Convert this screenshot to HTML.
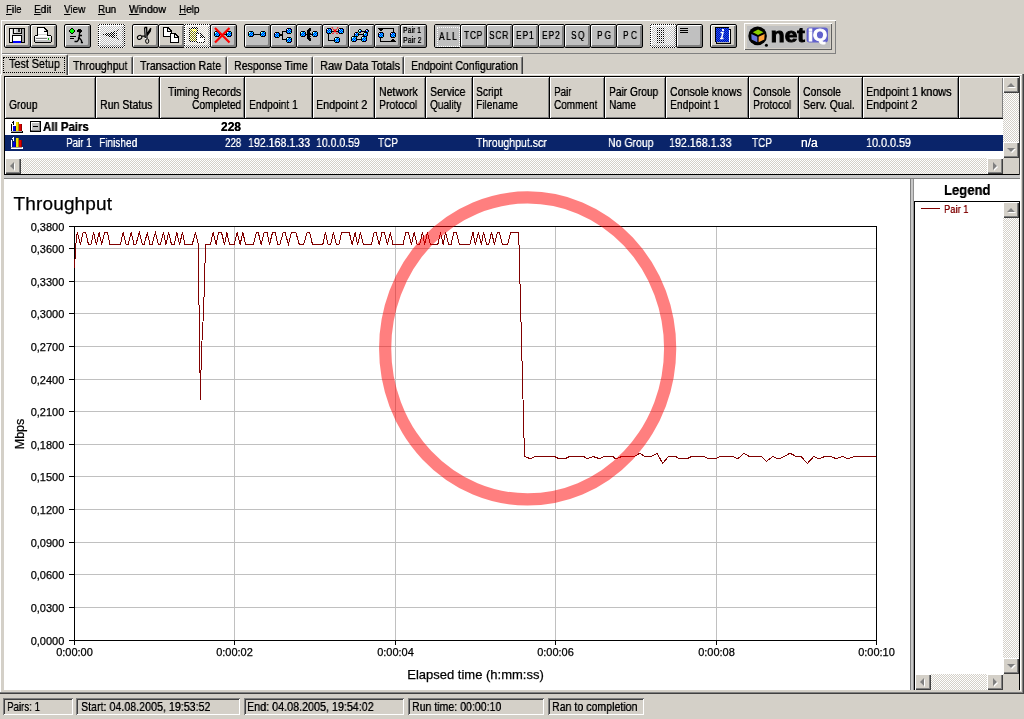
<!DOCTYPE html>
<html lang="en"><head><meta charset="utf-8"><title>Throughput</title>
<style>
html,body{margin:0;padding:0}
body{width:1024px;height:719px;background:#D4D0C8;position:relative;overflow:hidden;font:12px "Liberation Sans",sans-serif;color:#000}
.a,.t,.b,.hd,.sb,.tb{position:absolute}
.t{white-space:nowrap;transform-origin:0 0;will-change:transform;text-shadow:0 0 0 currentColor}
.b{top:24px;width:25px;height:22px;border:1px solid #000;border-radius:2px;background:#C0C0C0;box-shadow:inset 1px 1px 0 #fff,inset -1px -1px 0 #808080,inset -2px -2px 0 #808080}
.b.l{background:#D4D0C8}
.hd{top:77px;height:41px;background:#D4D0C8;box-shadow:inset 1px 1px 0 #fff,inset -1px -1px 0 #808080}
.sb{width:16px;height:16px;background:#D4D0C8;box-shadow:inset 1px 1px 0 #fff,inset -1px -1px 0 #404040,inset -2px -2px 0 #808080}
.sb i{position:absolute;width:0;height:0;border:4px solid transparent;filter:drop-shadow(1px 1px 0 #fff)}
.ck{background:repeating-conic-gradient(#fff 0 25%,#D4D0C8 0 50%) 0 0/2px 2px}
.tb{top:56px;height:18px;box-sizing:border-box;border-top:1px solid #fff;border-left:1px solid #fff;border-right:1px solid #404040;border-radius:2px 2px 0 0;box-shadow:inset -1px 0 0 #808080}
.st{position:absolute;top:698px;height:17px;box-shadow:inset 1px 1px 0 #808080,inset -1px -1px 0 #fff,inset 2px 2px 0 #404040}
</style></head>
<body>
<div class="t" style="left:5.6px;top:3.69px;font-size:11px;line-height:11px;transform:scaleX(0.880);"><u>F</u>ile</div>
<div class="t" style="left:33.8px;top:3.69px;font-size:11px;line-height:11px;transform:scaleX(0.918);"><u>E</u>dit</div>
<div class="t" style="left:63.8px;top:3.69px;font-size:11px;line-height:11px;transform:scaleX(0.897);"><u>V</u>iew</div>
<div class="t" style="left:98px;top:3.69px;font-size:11px;line-height:11px;transform:scaleX(0.902);"><u>R</u>un</div>
<div class="t" style="left:129.3px;top:3.69px;font-size:11px;line-height:11px;transform:scaleX(0.943);"><u>W</u>indow</div>
<div class="t" style="left:178.8px;top:3.69px;font-size:11px;line-height:11px;transform:scaleX(0.902);"><u>H</u>elp</div>
<div class="a" style="left:1px;top:20px;width:835px;height:34px;box-shadow:inset 1px 1px 0 #fff,inset -1px -1px 0 #808080"></div>
<div class="b l" style="left:4px"></div>
<div class="b l" style="left:30px"></div>
<div class="b" style="left:64px"></div>
<div class="b" style="left:98px"></div>
<div class="b l" style="left:132px"></div>
<div class="b l" style="left:158px"></div>
<div class="b l" style="left:184px"></div>
<div class="b" style="left:210px"></div>
<div class="b" style="left:244px"></div>
<div class="b" style="left:270px"></div>
<div class="b" style="left:296px"></div>
<div class="b" style="left:322px"></div>
<div class="b" style="left:348px"></div>
<div class="b" style="left:374px"></div>
<div class="b" style="left:400px"></div>
<div class="b" style="left:434px"></div>
<div class="b" style="left:460px"></div>
<div class="b" style="left:486px"></div>
<div class="b" style="left:512px"></div>
<div class="b" style="left:538px"></div>
<div class="b" style="left:564px"></div>
<div class="b" style="left:590px"></div>
<div class="b" style="left:616px"></div>
<div class="b" style="left:650px"></div>
<div class="b" style="left:676px"></div>
<div class="b l" style="left:710px"></div>
<div class="a" style="left:435px;top:25px;width:25px;height:22px;background:#C0C0C0"></div>
<div class="a" style="left:437px;top:27px;width:21px;height:18px;border:1px dotted #fff"></div>
<div class="a" style="left:744px;top:23px;width:88px;height:27px;background:#C0C0C0;box-shadow:inset 1px 1px 0 #fff,inset -1px -1px 0 #606060,inset 3px 3px 0 #D4D0C8,inset -2px -2px 0 #D4D0C8"></div>
<div class="t" style="left:438.8px;top:31.54px;font-size:10px;line-height:10px;letter-spacing:1.82px;transform:scaleX(0.84)">ALL</div>
<div class="t" style="left:463.5px;top:30.54px;font-size:10px;line-height:10px;letter-spacing:0.89px;transform:scaleX(0.84)">TCP</div>
<div class="t" style="left:488.8px;top:30.54px;font-size:10px;line-height:10px;letter-spacing:0.87px;transform:scaleX(0.84)">SCR</div>
<div class="t" style="left:516px;top:30.54px;font-size:10px;line-height:10px;letter-spacing:1.14px;transform:scaleX(0.84)">EP1</div>
<div class="t" style="left:542px;top:30.54px;font-size:10px;line-height:10px;letter-spacing:1.14px;transform:scaleX(0.84)">EP2</div>
<div class="t" style="left:570.5px;top:30.54px;font-size:10px;line-height:10px;letter-spacing:1.62px;transform:scaleX(0.84)">SQ</div>
<div class="t" style="left:596.5px;top:30.54px;font-size:10px;line-height:10px;letter-spacing:2.22px;transform:scaleX(0.84)">PG</div>
<div class="t" style="left:622.5px;top:30.54px;font-size:10px;line-height:10px;letter-spacing:2.77px;transform:scaleX(0.84)">PC</div>
<div class="t" style="left:403.4px;top:26.20px;font-size:8.5px;line-height:8.5px;transform:scaleX(0.811);">Pair 1</div>
<div class="t" style="left:403.4px;top:36.20px;font-size:8.5px;line-height:8.5px;transform:scaleX(0.829);">Pair 2</div>
<svg class="a" style="left:0;top:20px" width="840" height="34" viewBox="0 20 840 34" shape-rendering="crispEdges" font-family="Liberation Sans, sans-serif">
<defs><pattern id="nd" width="2" height="2" patternUnits="userSpaceOnUse"><rect width="2" height="2" fill="#0000FF"/><rect width="1" height="1" fill="#00FFFF"/><rect x="1" y="1" width="1" height="1" fill="#00FFFF"/></pattern><pattern id="dz" width="2" height="2" patternUnits="userSpaceOnUse"><rect width="1" height="1" fill="#fff"/><rect x="1" y="1" width="1" height="1" fill="#fff"/></pattern><pattern id="bk" width="2" height="2" patternUnits="userSpaceOnUse"><rect width="2" height="2" fill="#0000C0"/><rect width="1" height="1" fill="#2060E0"/><rect x="1" y="1" width="1" height="1" fill="#2060E0"/></pattern></defs>
<rect x="9" y="28" width="16" height="15" fill="#000"/><rect x="10" y="29" width="14" height="13" fill="#C8C8C8"/><rect x="10" y="29" width="2" height="13" fill="#F4F4F4"/><rect x="22" y="29" width="2" height="13" fill="#A8A8A8"/><rect x="13" y="28" width="9" height="6" fill="#000"/><rect x="14" y="29" width="7" height="4" fill="#C8C8C8"/><rect x="18" y="29" width="2" height="3" fill="#303030"/><rect x="14" y="29" width="2" height="4" fill="#E8E8E8"/><rect x="12" y="35" width="10" height="8" fill="#000"/><rect x="13" y="36" width="8" height="5" fill="#fff"/><rect x="13" y="41" width="8" height="2" fill="#0000FF"/>
<path d="M37 27H44L48 31V37H37Z" fill="#000"/><path d="M38 28H43.5V31.5H47V36H38Z" fill="#fff"/><path d="M44 28.5L46.5 31H44Z" fill="#E0E0E0"/><rect x="38" y="34" width="9" height="1" fill="#D0D0D0"/><path d="M35 35H38V36H47V35H51V36H52V42H51V43H35V42H34V36H35Z" fill="#000"/><rect x="35" y="36" width="16" height="6" fill="#E8E8E8"/><rect x="35" y="36" width="16" height="1" fill="#fff"/><rect x="35" y="40" width="16" height="2" fill="#C0C0C0"/><rect x="36" y="38" width="11" height="1" fill="#808080"/><rect x="36" y="39" width="11" height="1" fill="#fff"/><rect x="48" y="38" width="1" height="2" fill="#00B000"/>
<rect x="71" y="28" width="2" height="6" fill="#000"/><rect x="70" y="29" width="4" height="4" fill="#000"/><rect x="69" y="30" width="6" height="2" fill="#000"/><rect x="71" y="29" width="2" height="4" fill="#00FF00"/><rect x="70" y="30" width="4" height="2" fill="#00FF00"/><rect x="70" y="36" width="6" height="1" fill="#000"/><rect x="70" y="38" width="4" height="1" fill="#000"/><path d="M78 29H81V30H82V32H81V33H79V32H77V30H78Z" fill="#000"/><path d="M79.5 32V36L78.5 38V40M78.5 35.5H82M78.5 40L77 41.5H74.5M79 37.5L81.5 40.5V42.5H83" fill="none" stroke="#000" stroke-width="1.3" shape-rendering="geometricPrecision"/>
<path d="M103 34.5L115 31V38.5Z" fill="#000"/><path d="M118.5 29.5L116.5 32V37L118.5 39.5" fill="none" stroke="#000" stroke-width="1" shape-rendering="geometricPrecision"/>
<path d="M144.6 27.5H146.6L147 38.5H145.3Z" fill="#fff"/><path d="M144.6 27.5H146.6L147 38.5M144.6 27.5L145.3 38M150.8 28.2L146.8 34.6M150.8 28.2L150.2 31.2L146.9 36M145.3 36L141.8 36.2" fill="none" stroke="#000" stroke-width="1.3" shape-rendering="geometricPrecision"/><ellipse cx="139.6" cy="37.4" rx="2.3" ry="1.9" transform="rotate(-30 139.6 37.4)" fill="none" stroke="#000" shape-rendering="geometricPrecision"/><ellipse cx="147.2" cy="41.1" rx="1.6" ry="2.3" fill="none" stroke="#000" shape-rendering="geometricPrecision"/>
<path d="M163 27H168L172 31V37H163Z" fill="#000"/><path d="M164 28H167V32H171V36H164Z" fill="#fff"/><path d="M168 28.5L170.5 31H168Z" fill="#E8E8E8"/><path d="M170 33H175L179 37V43H170Z" fill="#000"/><path d="M171 34H174V38H178V42H171Z" fill="#fff"/><path d="M175 34.5L177.5 37H175Z" fill="#E8E8E8"/>
<rect x="189" y="28" width="9" height="14" fill="#000"/><rect x="190" y="29" width="7" height="12" fill="#808000"/><rect x="191" y="27" width="6" height="2" fill="#000"/><rect x="192" y="29" width="4" height="2" fill="#FFFF00"/><path d="M196 33H201L205 37V43H196Z" fill="#000"/><path d="M197 34H200V38H204V42H197Z" fill="#fff"/>
<rect x="220" y="34" width="7" height="1" fill="#000"/><rect x="215" y="31" width="4" height="6" fill="#000"/><rect x="214" y="32" width="6" height="4" fill="#000"/><rect x="215" y="32" width="4" height="4" fill="url(#nd)"/><rect x="215" y="32" width="1" height="1" fill="#fff"/><rect x="227" y="31" width="4" height="6" fill="#000"/><rect x="226" y="32" width="6" height="4" fill="#000"/><rect x="227" y="32" width="4" height="4" fill="url(#nd)"/><rect x="227" y="32" width="1" height="1" fill="#fff"/><path d="M215 28L229.5 42.5M229.5 28L215 42.5" fill="none" stroke="#FF0000" stroke-width="2.2" shape-rendering="geometricPrecision"/>
<rect x="254" y="34" width="6" height="1" fill="#000"/><rect x="249" y="31" width="4" height="6" fill="#000"/><rect x="248" y="32" width="6" height="4" fill="#000"/><rect x="249" y="32" width="4" height="4" fill="url(#nd)"/><rect x="249" y="32" width="1" height="1" fill="#fff"/><rect x="261" y="31" width="4" height="6" fill="#000"/><rect x="260" y="32" width="6" height="4" fill="#000"/><rect x="261" y="32" width="4" height="4" fill="url(#nd)"/><rect x="261" y="32" width="1" height="1" fill="#fff"/><rect x="280" y="34" width="3" height="2" fill="#000"/><path d="M286 31.5H282.5V39.5H286" fill="none" stroke="#000" stroke-width="1" /><rect x="275" y="32" width="4" height="6" fill="#000"/><rect x="274" y="33" width="6" height="4" fill="#000"/><rect x="275" y="33" width="4" height="4" fill="url(#nd)"/><rect x="275" y="33" width="1" height="1" fill="#fff"/><rect x="287" y="28" width="4" height="6" fill="#000"/><rect x="286" y="29" width="6" height="4" fill="#000"/><rect x="287" y="29" width="4" height="4" fill="url(#nd)"/><rect x="287" y="29" width="1" height="1" fill="#fff"/><rect x="287" y="37" width="4" height="6" fill="#000"/><rect x="286" y="38" width="6" height="4" fill="#000"/><rect x="287" y="38" width="4" height="4" fill="url(#nd)"/><rect x="287" y="38" width="1" height="1" fill="#fff"/><rect x="306" y="34" width="6" height="1" fill="#000"/><rect x="301" y="31" width="4" height="6" fill="#000"/><rect x="300" y="32" width="6" height="4" fill="#000"/><rect x="301" y="32" width="4" height="4" fill="url(#nd)"/><rect x="301" y="32" width="1" height="1" fill="#fff"/><rect x="313" y="31" width="4" height="6" fill="#000"/><rect x="312" y="32" width="6" height="4" fill="#000"/><rect x="313" y="32" width="4" height="4" fill="url(#nd)"/><rect x="313" y="32" width="1" height="1" fill="#fff"/><path d="M309 28H311V31H310V33H311V34H310V36H311V37H310V38H311V41H309V40H308V39H307V30H308V29H309Z" fill="#000"/><rect x="332" y="31" width="7" height="1" fill="#000"/><path d="M328.5 34V40.5H334" fill="none" stroke="#000" stroke-width="1" /><rect x="327" y="28" width="4" height="6" fill="#000"/><rect x="326" y="29" width="6" height="4" fill="#000"/><rect x="327" y="29" width="4" height="4" fill="url(#nd)"/><rect x="327" y="29" width="1" height="1" fill="#fff"/><rect x="339" y="28" width="4" height="6" fill="#000"/><rect x="338" y="29" width="6" height="4" fill="#000"/><rect x="339" y="29" width="4" height="4" fill="url(#nd)"/><rect x="339" y="29" width="1" height="1" fill="#fff"/><rect x="335" y="37" width="4" height="6" fill="#000"/><rect x="334" y="38" width="6" height="4" fill="#000"/><rect x="335" y="38" width="4" height="4" fill="url(#nd)"/><rect x="335" y="38" width="1" height="1" fill="#fff"/><path d="M331.8 27.3L338.2 34.7M338.2 27.3L331.8 34.7" fill="none" stroke="#FF0000" stroke-width="1.2" stroke-dasharray="1.5 0.9" shape-rendering="geometricPrecision"/><rect x="334" y="30" width="2" height="2" fill="#FF0000"/><rect x="362" y="31" width="3" height="1" fill="#000"/><rect x="359" y="34" width="4" height="1" fill="#000"/><rect x="357" y="39" width="4" height="1" fill="#000"/><rect x="359" y="29" width="2" height="4" fill="#000"/><rect x="358" y="30" width="4" height="2" fill="#000"/><rect x="359" y="30" width="2" height="2" fill="url(#nd)"/><rect x="359" y="30" width="1" height="1" fill="#fff"/><rect x="366" y="29" width="2" height="4" fill="#000"/><rect x="365" y="30" width="4" height="2" fill="#000"/><rect x="366" y="30" width="2" height="2" fill="url(#nd)"/><rect x="366" y="30" width="1" height="1" fill="#fff"/><rect x="355" y="32" width="3" height="5" fill="#000"/><rect x="354" y="33" width="5" height="3" fill="#000"/><rect x="355" y="33" width="3" height="3" fill="url(#nd)"/><rect x="355" y="33" width="1" height="1" fill="#fff"/><rect x="364" y="32" width="3" height="5" fill="#000"/><rect x="363" y="33" width="5" height="3" fill="#000"/><rect x="364" y="33" width="3" height="3" fill="url(#nd)"/><rect x="364" y="33" width="1" height="1" fill="#fff"/><rect x="352" y="36" width="4" height="6" fill="#000"/><rect x="351" y="37" width="6" height="4" fill="#000"/><rect x="352" y="37" width="4" height="4" fill="url(#nd)"/><rect x="352" y="37" width="1" height="1" fill="#fff"/><rect x="362" y="36" width="4" height="6" fill="#000"/><rect x="361" y="37" width="6" height="4" fill="#000"/><rect x="362" y="37" width="4" height="4" fill="url(#nd)"/><rect x="362" y="37" width="1" height="1" fill="#fff"/><path d="M380.5 28.5H393.5V32M380.5 38V41.5H396" fill="none" stroke="#000" stroke-width="1" /><path d="M378 28H384L381 32Z" fill="#000"/><path d="M390 42H396L393 38Z" fill="#000"/><rect x="379" y="32" width="4" height="6" fill="#000"/><rect x="378" y="33" width="6" height="4" fill="#000"/><rect x="379" y="33" width="4" height="4" fill="url(#nd)"/><rect x="379" y="33" width="1" height="1" fill="#fff"/><rect x="391" y="32" width="4" height="6" fill="#000"/><rect x="390" y="33" width="6" height="4" fill="#000"/><rect x="391" y="33" width="4" height="4" fill="url(#nd)"/><rect x="391" y="33" width="1" height="1" fill="#fff"/>
<rect x="656" y="28" width="8" height="1" fill="#000"/><rect x="656" y="30" width="8" height="1" fill="#000"/><rect x="656" y="32" width="8" height="1" fill="#000"/><rect x="656" y="34" width="8" height="1" fill="#000"/><rect x="656" y="36" width="8" height="1" fill="#000"/><rect x="656" y="38" width="8" height="1" fill="#000"/><rect x="656" y="40" width="8" height="1" fill="#000"/><rect x="656" y="42" width="8" height="1" fill="#000"/><rect x="680" y="28" width="8" height="1" fill="#000"/><rect x="680" y="30" width="8" height="1" fill="#000"/><rect x="680" y="32" width="8" height="1" fill="#000"/><rect x="716" y="29" width="15" height="15" fill="#000"/><rect x="717" y="30" width="13" height="13" fill="#fff"/><rect x="717" y="42" width="13" height="1" fill="#B0B0B0"/><rect x="715" y="27" width="14" height="15" fill="#000"/><rect x="716" y="28" width="13" height="14" fill="url(#bk)"/><rect x="722" y="29" width="2" height="2" fill="#fff"/><path d="M720.5 32.5H723L721.5 38.5M720 38.5H723.5" fill="none" stroke="#fff" stroke-width="1.5" shape-rendering="geometricPrecision"/>
<rect x="98" y="24" width="27" height="24" fill="url(#dz)"/><rect x="184" y="24" width="26" height="24" fill="url(#dz)"/><rect x="650" y="24" width="26" height="24" fill="url(#dz)"/>
<g shape-rendering="geometricPrecision"><circle cx="757.6" cy="35.9" r="9.3" fill="#000"/><circle cx="766.4" cy="45.3" r="1.5" fill="#000"/><path d="M752.8 32.2L758.1 29.5L763.4 32.2L758.1 34.9Z" fill="#8CD000"/><path d="M751.3 34L757.3 36.7V42.3L751.6 39.4Z" fill="#6674DC"/><path d="M764.6 34L758.6 36.7V42.3L764.3 39.4Z" fill="#FFA23C"/><rect x="806.6" y="27.4" width="21.4" height="15.2" rx="3" fill="#6262CC"/><text x="770.8" y="41.6" font-size="19.5" font-weight="bold" textLength="34" lengthAdjust="spacingAndGlyphs" stroke="#000" stroke-width="0.9">net</text><text x="808" y="41.2" font-size="16" font-weight="bold" fill="#fff" textLength="19" lengthAdjust="spacingAndGlyphs" stroke="#fff" stroke-width="0.9">iQ</text></g>
</svg>
<div class="a" style="left:0px;top:74px;width:1022px;height:1px;background:#fff"></div>
<div class="a" style="left:0px;top:74px;width:1px;height:619px;background:#fff"></div>
<div class="a" style="left:1022px;top:74px;width:1px;height:620px;background:#808080"></div>
<div class="a" style="left:1023px;top:74px;width:1px;height:620px;background:#404040"></div>
<div class="a" style="left:0px;top:692px;width:1023px;height:1px;background:#808080"></div>
<div class="a" style="left:0px;top:693px;width:1024px;height:1px;background:#404040"></div>
<div class="tb" style="left:68px;width:65px"></div>
<div class="t" style="left:73px;top:59.84px;font-size:12px;line-height:12px;transform:scaleX(0.888);">Throughput</div>
<div class="tb" style="left:133px;width:94px"></div>
<div class="t" style="left:140px;top:59.84px;font-size:12px;line-height:12px;transform:scaleX(0.893);">Transaction Rate</div>
<div class="tb" style="left:227px;width:86px"></div>
<div class="t" style="left:233.5px;top:59.84px;font-size:12px;line-height:12px;transform:scaleX(0.884);">Response Time</div>
<div class="tb" style="left:313px;width:91px"></div>
<div class="t" style="left:319.5px;top:59.84px;font-size:12px;line-height:12px;transform:scaleX(0.918);">Raw Data Totals</div>
<div class="tb" style="left:404px;width:119px"></div>
<div class="t" style="left:411.2px;top:59.84px;font-size:12px;line-height:12px;transform:scaleX(0.875);">Endpoint Configuration</div>
<div class="tb" style="left:1px;top:54px;width:67px;height:21px;background:#D4D0C8"></div>
<div class="a" style="left:3px;top:57px;width:60px;height:14px;border:1px dotted #000"></div>
<div class="t" style="left:9px;top:57.84px;font-size:12px;line-height:12px;transform:scaleX(0.899);">Test Setup</div>
<div class="a" style="left:4px;top:76px;width:1016px;height:99px;background:#000"></div>
<div class="a" style="left:5px;top:77px;width:1014px;height:97px;background:#fff"></div>
<div class="a" style="left:1019px;top:76px;width:1px;height:99px;background:#404040"></div>
<div class="a" style="left:1020px;top:76px;width:1px;height:615px;background:#fff"></div>
<div class="hd" style="left:5px;width:90px"></div>
<div class="hd" style="left:96px;width:63px"></div>
<div class="hd" style="left:160px;width:84px"></div>
<div class="hd" style="left:245px;width:67px"></div>
<div class="hd" style="left:313px;width:61px"></div>
<div class="hd" style="left:375px;width:50px"></div>
<div class="hd" style="left:426px;width:46px"></div>
<div class="hd" style="left:473px;width:76px"></div>
<div class="hd" style="left:550px;width:54px"></div>
<div class="hd" style="left:605px;width:60px"></div>
<div class="hd" style="left:666px;width:82px"></div>
<div class="hd" style="left:749px;width:49px"></div>
<div class="hd" style="left:799px;width:63px"></div>
<div class="hd" style="left:863px;width:95px"></div>
<div class="hd" style="left:959px;width:44px"></div>
<div class="a" style="left:95px;top:77px;width:1px;height:41px;background:#000"></div>
<div class="a" style="left:159px;top:77px;width:1px;height:41px;background:#000"></div>
<div class="a" style="left:244px;top:77px;width:1px;height:41px;background:#000"></div>
<div class="a" style="left:312px;top:77px;width:1px;height:41px;background:#000"></div>
<div class="a" style="left:374px;top:77px;width:1px;height:41px;background:#000"></div>
<div class="a" style="left:425px;top:77px;width:1px;height:41px;background:#000"></div>
<div class="a" style="left:472px;top:77px;width:1px;height:41px;background:#000"></div>
<div class="a" style="left:549px;top:77px;width:1px;height:41px;background:#000"></div>
<div class="a" style="left:604px;top:77px;width:1px;height:41px;background:#000"></div>
<div class="a" style="left:665px;top:77px;width:1px;height:41px;background:#000"></div>
<div class="a" style="left:748px;top:77px;width:1px;height:41px;background:#000"></div>
<div class="a" style="left:798px;top:77px;width:1px;height:41px;background:#000"></div>
<div class="a" style="left:862px;top:77px;width:1px;height:41px;background:#000"></div>
<div class="a" style="left:958px;top:77px;width:1px;height:41px;background:#000"></div>
<div class="a" style="left:5px;top:118px;width:998px;height:1px;background:#000"></div>
<div class="t" style="left:8.75px;top:98.84px;font-size:12px;line-height:12px;transform:scaleX(0.855);">Group</div>
<div class="t" style="left:99.5px;top:98.84px;font-size:12px;line-height:12px;transform:scaleX(0.884);">Run Status</div>
<div class="t" style="left:168px;top:85.84px;font-size:12px;line-height:12px;transform:scaleX(0.876);">Timing Records</div>
<div class="t" style="left:192px;top:98.84px;font-size:12px;line-height:12px;transform:scaleX(0.849);">Completed</div>
<div class="t" style="left:248.75px;top:98.84px;font-size:12px;line-height:12px;transform:scaleX(0.850);">Endpoint 1</div>
<div class="t" style="left:316.25px;top:98.84px;font-size:12px;line-height:12px;transform:scaleX(0.893);">Endpoint 2</div>
<div class="t" style="left:378.75px;top:85.84px;font-size:12px;line-height:12px;transform:scaleX(0.880);">Network</div>
<div class="t" style="left:378.75px;top:98.84px;font-size:12px;line-height:12px;transform:scaleX(0.869);">Protocol</div>
<div class="t" style="left:429.5px;top:85.84px;font-size:12px;line-height:12px;transform:scaleX(0.887);">Service</div>
<div class="t" style="left:429.5px;top:98.84px;font-size:12px;line-height:12px;transform:scaleX(0.843);">Quality</div>
<div class="t" style="left:476.25px;top:85.84px;font-size:12px;line-height:12px;transform:scaleX(0.856);">Script</div>
<div class="t" style="left:476.25px;top:98.84px;font-size:12px;line-height:12px;transform:scaleX(0.846);">Filename</div>
<div class="t" style="left:553.75px;top:85.84px;font-size:12px;line-height:12px;transform:scaleX(0.820);">Pair</div>
<div class="t" style="left:553.75px;top:98.84px;font-size:12px;line-height:12px;transform:scaleX(0.832);">Comment</div>
<div class="t" style="left:608.75px;top:85.84px;font-size:12px;line-height:12px;transform:scaleX(0.849);">Pair Group</div>
<div class="t" style="left:608.75px;top:98.84px;font-size:12px;line-height:12px;transform:scaleX(0.843);">Name</div>
<div class="t" style="left:669.5px;top:85.84px;font-size:12px;line-height:12px;transform:scaleX(0.882);">Console knows</div>
<div class="t" style="left:669.5px;top:98.84px;font-size:12px;line-height:12px;transform:scaleX(0.858);">Endpoint 1</div>
<div class="t" style="left:752.5px;top:85.84px;font-size:12px;line-height:12px;transform:scaleX(0.852);">Console</div>
<div class="t" style="left:752.5px;top:98.84px;font-size:12px;line-height:12px;transform:scaleX(0.869);">Protocol</div>
<div class="t" style="left:802.5px;top:85.84px;font-size:12px;line-height:12px;transform:scaleX(0.863);">Console</div>
<div class="t" style="left:802.5px;top:98.84px;font-size:12px;line-height:12px;transform:scaleX(0.875);">Serv. Qual.</div>
<div class="t" style="left:866.25px;top:85.84px;font-size:12px;line-height:12px;transform:scaleX(0.903);">Endpoint 1 knows</div>
<div class="t" style="left:866.25px;top:98.84px;font-size:12px;line-height:12px;transform:scaleX(0.893);">Endpoint 2</div>
<div class="t" style="left:43.2px;top:120.84px;font-size:12px;line-height:12px;transform:scaleX(0.954);font-weight:bold;">All Pairs</div>
<div class="t" style="left:221.25px;top:120.84px;font-size:12px;line-height:12px;font-weight:bold;">228</div>
<div class="a" style="left:5px;top:135px;width:998px;height:16px;background:#0A246A"></div>
<div class="t" style="left:66.25px;top:136.84px;font-size:12px;line-height:12px;transform:scaleX(0.818);color:#fff;">Pair 1</div>
<div class="t" style="left:98.75px;top:136.84px;font-size:12px;line-height:12px;transform:scaleX(0.843);color:#fff;">Finished</div>
<div class="t" style="left:225px;top:136.84px;font-size:12px;line-height:12px;transform:scaleX(0.812);color:#fff;">228</div>
<div class="t" style="left:248px;top:136.84px;font-size:12px;line-height:12px;transform:scaleX(0.885);color:#fff;">192.168.1.33</div>
<div class="t" style="left:316.25px;top:136.84px;font-size:12px;line-height:12px;transform:scaleX(0.874);color:#fff;">10.0.0.59</div>
<div class="t" style="left:378px;top:136.84px;font-size:12px;line-height:12px;transform:scaleX(0.833);color:#fff;">TCP</div>
<div class="t" style="left:476.25px;top:136.84px;font-size:12px;line-height:12px;transform:scaleX(0.877);color:#fff;">Throughput.scr</div>
<div class="t" style="left:607.5px;top:136.84px;font-size:12px;line-height:12px;transform:scaleX(0.875);color:#fff;">No Group</div>
<div class="t" style="left:668.75px;top:136.84px;font-size:12px;line-height:12px;transform:scaleX(0.892);color:#fff;">192.168.1.33</div>
<div class="t" style="left:752px;top:136.84px;font-size:12px;line-height:12px;transform:scaleX(0.833);color:#fff;">TCP</div>
<div class="t" style="left:801.25px;top:136.84px;font-size:12px;line-height:12px;color:#fff;">n/a</div>
<div class="t" style="left:865.5px;top:136.84px;font-size:12px;line-height:12px;transform:scaleX(0.899);color:#fff;">10.0.0.59</div>
<svg class="a" style="left:0;top:119px" width="60" height="34" viewBox="0 119 60 34" shape-rendering="crispEdges"><path d="M11.5 123.5V131.5H21M11.5 123.5L13.5 121.5V125" fill="none" stroke="#000"/><path d="M11 131H22V133H11Z" fill="#A0A0A0"/><path d="M11 132.5H22.5V130.5" fill="none" stroke="#000"/><rect x="13" y="126" width="3" height="5" fill="#0000E0"/><rect x="16" y="122" width="3" height="9" fill="#F0E000"/><rect x="19" y="124" width="3" height="7" fill="#E00000"/><rect x="18" y="122" width="1" height="9" fill="#A09000"/><rect x="21" y="124" width="1" height="7" fill="#900000"/><rect x="15" y="126" width="1" height="5" fill="#000090"/><path d="M11.5 139.5V147.5H21M11.5 139.5L13.5 137.5V141" fill="none" stroke="#fff"/><path d="M11 147H22V149H11Z" fill="#A0A0A0"/><path d="M11 148.5H22.5V146.5" fill="none" stroke="#fff"/><rect x="13" y="142" width="3" height="5" fill="#0000E0"/><rect x="16" y="138" width="3" height="9" fill="#F0E000"/><rect x="19" y="140" width="3" height="7" fill="#E00000"/><rect x="18" y="138" width="1" height="9" fill="#A09000"/><rect x="21" y="140" width="1" height="7" fill="#900000"/><rect x="15" y="142" width="1" height="5" fill="#000090"/><rect x="30" y="121" width="11" height="11" fill="#000"/><rect x="31" y="122" width="9" height="9" fill="#808080"/><rect x="31" y="122" width="8" height="8" fill="#fff"/><rect x="32" y="123" width="7" height="7" fill="#C0C0C0"/><rect x="33" y="126" width="5" height="1" fill="#000"/></svg>
<div class="a ck" style="left:1003px;top:77px;width:16px;height:81px"></div>
<div class="a ck" style="left:5px;top:158px;width:998px;height:16px"></div>
<div class="a" style="left:1003px;top:158px;width:16px;height:16px;background:#D4D0C8"></div>
<div class="sb" style="left:1003px;top:77px"><i style="left:4px;top:6px;border-bottom-color:#808080;border-top-width:0;border-bottom-width:4px"></i></div>
<div class="sb" style="left:1003px;top:142px"><i style="left:4px;top:6px;border-top-color:#808080;border-bottom-width:0;border-top-width:4px"></i></div>
<div class="sb" style="left:5px;top:158px"><i style="left:5px;top:4px;border-right-color:#808080;border-left-width:0;border-right-width:4px"></i></div>
<div class="sb" style="left:987px;top:158px"><i style="left:6px;top:4px;border-left-color:#808080;border-right-width:0;border-left-width:4px"></i></div>
<div class="a" style="left:4px;top:175px;width:1016px;height:3px;background:#C8C8C8"></div>
<div class="a" style="left:4px;top:178px;width:1016px;height:1px;background:#808080"></div>
<div class="a" style="left:4px;top:179px;width:906px;height:511px;background:#fff"></div>
<div class="a" style="left:910px;top:179px;width:1px;height:511px;background:#808080"></div>
<div class="a" style="left:911px;top:179px;width:2px;height:511px;background:#C8C8C8"></div>
<div class="a" style="left:913px;top:179px;width:1px;height:511px;background:#909090"></div>
<div class="a" style="left:914px;top:179px;width:106px;height:511px;background:#fff"></div>
<svg class="a" style="left:0;top:178px;will-change:transform" width="912" height="515" viewBox="0 178 912 515" font-family="Liberation Sans, sans-serif" font-size="11">
<path d="M75 607.5H876M75 574.5H876M75 542.5H876M75 509.5H876M75 476.5H876M75 444.5H876M75 411.5H876M75 379.5H876M75 346.5H876M75 313.5H876M75 281.5H876M75 248.5H876M234.5 227V640M395.5 227V640M555.5 227V640M716.5 227V640" fill="none" stroke="#C0C0C0" shape-rendering="crispEdges"/>
<path d="M69 640.5H74M69 607.5H74M69 574.5H74M69 542.5H74M69 509.5H74M69 476.5H74M69 444.5H74M69 411.5H74M69 379.5H74M69 346.5H74M69 313.5H74M69 281.5H74M69 248.5H74M69 226.5H74M74.5 641V645M234.5 641V645M395.5 641V645M555.5 641V645M716.5 641V645M876.5 641V645M74.5 226.5H876.5V640.5H74.5Z" fill="none" stroke="#000" shape-rendering="crispEdges"/>
<g stroke="#000" stroke-width="0.25"><text x="64.3" y="644.6" text-anchor="end">0,0000</text>
<text x="64.3" y="611.6" text-anchor="end">0,0300</text>
<text x="64.3" y="578.6" text-anchor="end">0,0600</text>
<text x="64.3" y="546.6" text-anchor="end">0,0900</text>
<text x="64.3" y="513.6" text-anchor="end">0,1200</text>
<text x="64.3" y="480.6" text-anchor="end">0,1500</text>
<text x="64.3" y="448.6" text-anchor="end">0,1800</text>
<text x="64.3" y="415.6" text-anchor="end">0,2100</text>
<text x="64.3" y="383.6" text-anchor="end">0,2400</text>
<text x="64.3" y="350.6" text-anchor="end">0,2700</text>
<text x="64.3" y="317.6" text-anchor="end">0,3000</text>
<text x="64.3" y="285.6" text-anchor="end">0,3300</text>
<text x="64.3" y="252.6" text-anchor="end">0,3600</text>
<text x="64.3" y="230.6" text-anchor="end">0,3800</text>
<text x="74.5" y="656" text-anchor="middle">0:00:00</text>
<text x="234.5" y="656" text-anchor="middle">0:00:02</text>
<text x="395.5" y="656" text-anchor="middle">0:00:04</text>
<text x="555.5" y="656" text-anchor="middle">0:00:06</text>
<text x="716.5" y="656" text-anchor="middle">0:00:08</text>
<text x="876.5" y="656" text-anchor="middle">0:00:10</text>
<text x="13.5" y="210" font-size="19" letter-spacing="0.15">Throughput</text>
<text x="475.5" y="679" text-anchor="middle" font-size="13">Elapsed time (h:mm:ss)</text>
<text transform="translate(24,434) rotate(-90)" text-anchor="middle" font-size="12.5">Mbps</text></g>
<path d="M74.5,268 76.3,238 77.3,232.5 80.3,244.5 83.2,232.5 85.6,232.5 88.5,244.5 91,244.5 93.6,232.5 96.4,244.5 99.1,232.5 101.7,244.5 104.7,232.5 107.6,232.5 110,244.5 120.3,244.5 123.2,232.5 126.1,244.5 128.1,244.5 131.3,232.5 134,244.5 135.9,244.5 139.3,232.5 142.3,244.5 144.2,244.5 147.3,232.5 150,244.5 152,244.5 155.4,232.5 158.4,244.5 160.3,244.5 163.4,232.5 166,244.5 168.6,232.5 171.5,244.5 174.2,244.5 176.8,232.5 179.5,244.5 182.5,232.5 184.9,244.5 192.2,244.5 195.4,232.5 198.3,244.5 198.7,283 200.4,399.5 201.4,352 203,322 204.6,283 205.4,244.5 210.3,244.5 213.2,232.5 216.2,244.5 218.6,232.5 221.5,232.5 224.5,244.5 226.9,232.5 229.5,244.5 234.2,244.5 237.1,232.5 240.1,244.5 242.8,232.5 245.7,244.5 253.3,244.5 256.4,232.5 258.3,232.5 261.2,244.5 264.2,232.5 267.1,232.5 269.5,244.5 272.5,232.5 275.4,232.5 277.8,244.5 279.8,244.5 283.2,232.5 285.2,232.5 288.3,244.5 291.5,232.5 295.9,232.5 299.3,244.5 303.7,244.5 307.1,232.5 309.6,232.5 312.5,244.5 322.8,244.5 325.4,232.5 328.1,244.5 330.6,244.5 333.5,232.5 336.4,244.5 338.9,244.5 341.7,232.5 349.3,232.5 352.2,244.5 355.1,232.5 357.6,244.5 360.5,232.5 363.4,244.5 371.3,244.5 374.2,232.5 376.1,232.5 379.1,244.5 382,232.5 384.4,232.5 387.4,244.5 390.3,232.5 392.9,244.5 403,244.5 405.9,232.5 408.4,232.5 411.3,244.5 414.2,232.5 417.1,244.5 419.6,244.5 422.5,232.5 424.7,244.5 427.4,232.5 430.3,244.5 437.8,244.5 440.5,232.5 443.2,244.5 445.6,232.5 448.6,244.5 451,244.5 453.9,232.5 456.4,232.5 459.3,244.5 470,244.5 473,232.5 475.4,244.5 478.3,232.5 481.3,244.5 483.5,232.5 486.6,244.5 488.6,244.5 491.5,232.5 494.5,244.5 497.4,232.5 499.3,232.5 502.3,244.5 507.6,244.5 510.6,232.5 518.7,232.5 524.5,456.5 525.8,456.8 530.2,458.7 535.3,456.5 554.4,456.5 558.8,458.7 565.1,458.7 569.6,456.5 583.6,456.5 587.4,458.7 593.1,456.5 599.4,458.7 604.5,456.5 612.8,456.5 615.9,459 621.6,456.5 634.3,456.5 639.6,453.3 645.2,456.5 651.5,456.5 657.2,453.2 662.7,463.6 668.3,456.5 675.6,456.5 679.4,458.8 687,458.8 691.5,456.5 704.2,456.5 708.6,458.8 716.2,458.8 719.4,456.5 733.4,456.5 737.8,458.8 743.9,453.2 749.3,456.5 761.3,456.5 766.4,461.5 772.8,456.5 777.9,458.8 782.3,457.6 789.9,453.2 796.3,456.5 801.3,456.5 807.3,463.6 813.7,456.5 819.1,458.8 824.8,456.5 831.2,456.5 836.2,458.8 842.3,456.5 848.3,458.8 854,456.5 876,456.5" fill="none" stroke="#800000" stroke-width="1" shape-rendering="crispEdges"/>
<ellipse cx="527.65" cy="348.45" rx="142.5" ry="151" fill="none" stroke="#FF0000" stroke-opacity="0.5" stroke-width="12.2"/>
</svg>
<div class="t" style="left:943.8px;top:183.15px;font-size:14px;line-height:14px;transform:scaleX(0.932);font-weight:bold;">Legend</div>
<div class="a" style="left:914px;top:201px;width:106px;height:489px;background:#000"></div>
<div class="a" style="left:915px;top:202px;width:104px;height:488px;background:#fff"></div>
<div class="a" style="left:921px;top:208px;width:19px;height:1px;background:#800000"></div>
<div class="t" style="left:943.8px;top:203.69px;font-size:11px;line-height:11px;transform:scaleX(0.856);color:#800000;">Pair 1</div>
<div class="a ck" style="left:1003px;top:202px;width:16px;height:472px"></div>
<div class="a ck" style="left:915px;top:674px;width:88px;height:16px"></div>
<div class="a" style="left:1003px;top:674px;width:16px;height:16px;background:#D4D0C8"></div>
<div class="sb" style="left:1003px;top:202px"><i style="left:4px;top:6px;border-bottom-color:#808080;border-top-width:0;border-bottom-width:4px"></i></div>
<div class="sb" style="left:1003px;top:658px"><i style="left:4px;top:6px;border-top-color:#808080;border-bottom-width:0;border-top-width:4px"></i></div>
<div class="sb" style="left:915px;top:674px"><i style="left:5px;top:4px;border-right-color:#808080;border-left-width:0;border-right-width:4px"></i></div>
<div class="sb" style="left:987px;top:674px"><i style="left:6px;top:4px;border-left-color:#808080;border-right-width:0;border-left-width:4px"></i></div>
<div class="st" style="left:3px;width:70px"></div>
<div class="t" style="left:7px;top:700.84px;font-size:12px;line-height:12px;transform:scaleX(0.811);">Pairs: 1</div>
<div class="st" style="left:76px;width:164px"></div>
<div class="t" style="left:80.5px;top:700.84px;font-size:12px;line-height:12px;transform:scaleX(0.890);">Start: 04.08.2005, 19:53:52</div>
<div class="st" style="left:244px;width:160px"></div>
<div class="t" style="left:247.25px;top:700.84px;font-size:12px;line-height:12px;transform:scaleX(0.896);">End: 04.08.2005, 19:54:02</div>
<div class="st" style="left:408px;width:136px"></div>
<div class="t" style="left:411.7px;top:700.84px;font-size:12px;line-height:12px;transform:scaleX(0.881);">Run time: 00:00:10</div>
<div class="st" style="left:548px;width:96px"></div>
<div class="t" style="left:551.8px;top:700.84px;font-size:12px;line-height:12px;transform:scaleX(0.884);">Ran to completion</div>
</body></html>
